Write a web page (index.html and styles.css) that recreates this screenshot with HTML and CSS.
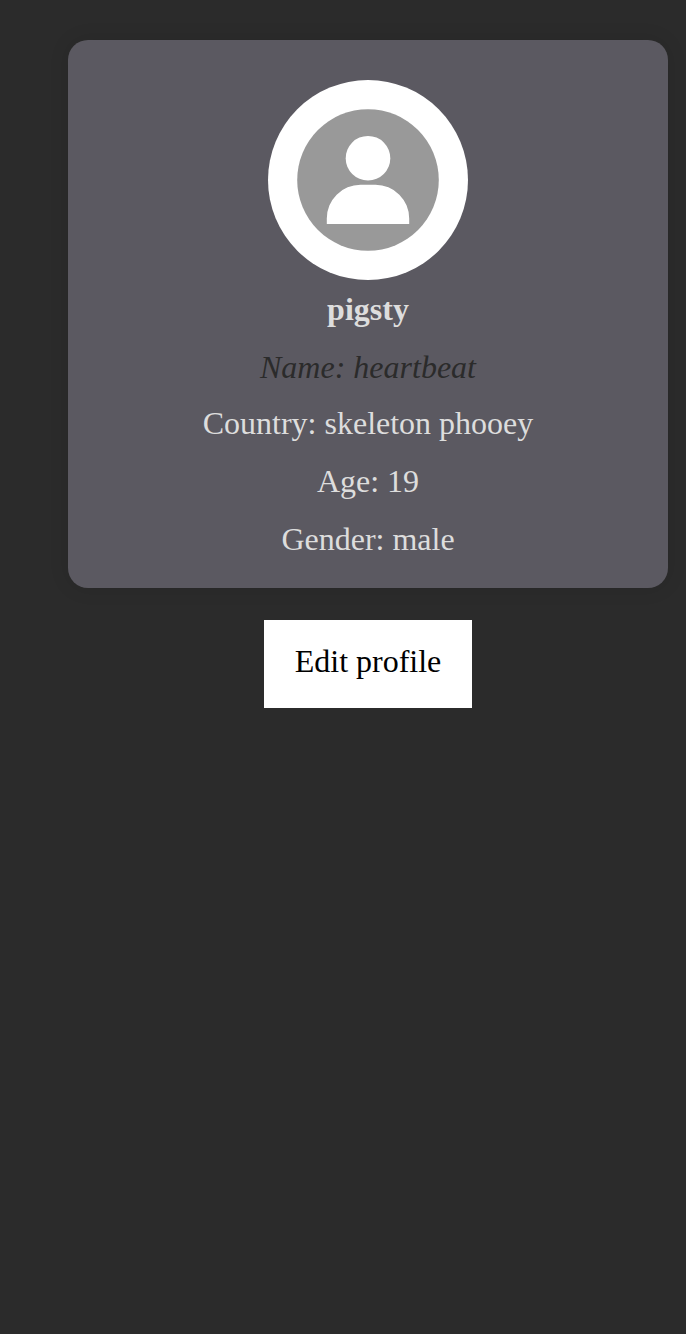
FILE: index.html
```html
<!DOCTYPE html>
<html lang="en">
<head>
<meta charset="utf-8">
<title>Profile</title>
<link rel="stylesheet" href="styles.css">
</head>
<body>
<main class="profile">
  <section class="card">
    <svg class="avatar" viewBox="0 0 200 200" aria-hidden="true">
      <circle cx="100" cy="100" r="70.800" fill="#999"/>
      <circle cx="100" cy="78.200" r="22.300" fill="#fff"/>
      <path d="M58.800 144V138.500A33.700 33.700 0 0 1 92.500 104.800H107.500A33.700 33.700 0 0 1 141.200 138.500V144Z" fill="#fff"/>
    </svg>
    <h1 class="username">pigsty</h1>
    <p class="name">Name: heartbeat</p>
    <p class="detail">Country: skeleton phooey</p>
    <p class="detail">Age: 19</p>
    <p class="detail">Gender: male</p>
  </section>
  <button class="edit" type="button">Edit profile</button>
</main>
</body>
</html>
```
FILE: styles.css
```css
body {
  margin: 0;
  min-height: 1334px;
  background: #2b2b2b;
  font-family: "Liberation Serif", "Times New Roman", serif;
  font-size: 32px;
  overflow: hidden;
}

.profile {
  display: flex;
  flex-direction: column;
  align-items: center;
  width: 600px;
  margin: 40px 0 0 68px;
}

.card {
  box-sizing: border-box;
  display: flex;
  flex-direction: column;
  align-items: center;
  width: 600px;
  height: 548px;
  padding-top: 40px;
  border-radius: 20px;
  background: #5b5961;
  box-shadow: 0 0 20px rgba(0, 0, 0, 0.1);
  color: #ddd;
}

.avatar {
  width: 200px;
  height: 200px;
  border-radius: 50%;
  background: #fff;
}

.username,
.name,
.detail {
  margin: 0;
  font-size: 32px;
  line-height: 38px;
}

.username {
  margin-top: 10px;
}

.name {
  margin-top: 20px;
  color: #2b2b2b;
  font-style: italic;
}

.detail {
  margin-top: 20px;
}

.name + .detail {
  margin-top: 18px;
}

.edit {
  width: 208px;
  height: 88px;
  margin-top: 32px;
  padding: 0 0 6px;
  border: 0;
  background: #fff;
  color: #000;
  font: inherit;
}
```
